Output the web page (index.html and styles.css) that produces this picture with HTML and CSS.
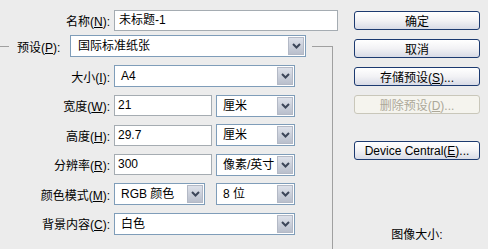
FILE: index.html
```html
<!DOCTYPE html>
<html lang="zh-CN">
<head>
  <meta charset="UTF-8">
  <title>新建</title>
  <link rel="stylesheet" href="styles.css">
</head>
<body>
  <div class="dialog">
    <!-- Columna izquierda: nombre y grupo de preajustes -->
    <div class="form">
      <div class="row name-row">
        <span class="lbl">名称(<u>N</u>):</span>
        <div class="text-input name-input">未标题-1</div>
      </div>

      <fieldset class="group">
        <legend>
          <span class="legend-lbl">预设(<u>P</u>):</span>
          <div class="combo preset"><span class="val">国际标准纸张</span><span class="arrow"><svg width="9" height="6" viewBox="0 0 9 6"><polyline points="1,1 4.5,4.5 8,1" /></svg></span></div>
        </legend>

        <div class="rows">
          <div class="row">
            <span class="lbl">大小(<u>I</u>):</span>
            <div class="combo wide"><span class="val">A4</span><span class="arrow"><svg width="9" height="6" viewBox="0 0 9 6"><polyline points="1,1 4.5,4.5 8,1" /></svg></span></div>
          </div>
          <div class="row">
            <span class="lbl">宽度(<u>W</u>):</span>
            <div class="text-input num">21</div>
            <div class="combo unit"><span class="val">厘米</span><span class="arrow"><svg width="9" height="6" viewBox="0 0 9 6"><polyline points="1,1 4.5,4.5 8,1" /></svg></span></div>
          </div>
          <div class="row">
            <span class="lbl">高度(<u>H</u>):</span>
            <div class="text-input num">29.7</div>
            <div class="combo unit"><span class="val">厘米</span><span class="arrow"><svg width="9" height="6" viewBox="0 0 9 6"><polyline points="1,1 4.5,4.5 8,1" /></svg></span></div>
          </div>
          <div class="row">
            <span class="lbl">分辨率(<u>R</u>):</span>
            <div class="text-input num">300</div>
            <div class="combo unit"><span class="val">像素/英寸</span><span class="arrow"><svg width="9" height="6" viewBox="0 0 9 6"><polyline points="1,1 4.5,4.5 8,1" /></svg></span></div>
          </div>
          <div class="row">
            <span class="lbl">颜色模式(<u>M</u>):</span>
            <div class="combo mode"><span class="val">RGB 颜色</span><span class="arrow"><svg width="9" height="6" viewBox="0 0 9 6"><polyline points="1,1 4.5,4.5 8,1" /></svg></span></div>
            <div class="combo unit"><span class="val">8 位</span><span class="arrow"><svg width="9" height="6" viewBox="0 0 9 6"><polyline points="1,1 4.5,4.5 8,1" /></svg></span></div>
          </div>
          <div class="row">
            <span class="lbl">背景内容(<u>C</u>):</span>
            <div class="combo wide"><span class="val">白色</span><span class="arrow"><svg width="9" height="6" viewBox="0 0 9 6"><polyline points="1,1 4.5,4.5 8,1" /></svg></span></div>
          </div>
        </div>
      </fieldset>
    </div>

    <!-- Columna derecha: botones -->
    <div class="side">
      <button class="btn">确定</button>
      <button class="btn">取消</button>
      <button class="btn">存储预设(<u>S</u>)...</button>
      <button class="btn" disabled>删除预设(<u>D</u>)...</button>
      <button class="btn device">Device Central(<u>E</u>)...</button>
      <div class="img-size">图像大小:</div>
    </div>
  </div>
</body>
</html>
```

FILE: styles.css
```css
/* Base */
* {
  box-sizing: border-box;
}
body {
  margin: 0;
  width: 488px;
  height: 249px;
  overflow: hidden;
  background: #ececec;
  color: #000;
  font-family: Tahoma, "Liberation Sans", "Noto Sans CJK SC", sans-serif;
  font-size: 12px;
}
u {
  text-decoration: underline;
  text-underline-offset: 1px;
}
.dialog {
  display: flex;
  height: 249px;
  overflow: hidden;
}
/* Columna izquierda */
.form {
  width: 338px;
}
.row {
  display: flex;
  align-items: center;
  height: 22px;
}
.name-row {
  margin-top: 10px;
  height: 21px;
}
.lbl {
  width: 114px;
  padding-right: 4px;
  text-align: right;
  white-space: nowrap;
}
.text-input {
  height: 21px;
  line-height: 19px;
  padding-left: 3px;
  background: #fff;
  border: 1px solid #a5acb2;
}
.name-input {
  width: 224px;
  padding-left: 4px;
}
.num {
  width: 98px;
  margin-right: 4px;
}
/* Grupo de preajustes */
.group {
  margin: 4px 0 0 -2px;
  width: 335px;
  padding: 0 0 30px 2px;
  border: none;
  border-top: 1px solid #a0a0a0;
  border-right: 1px solid #a0a0a0;
}
.group legend {
  display: flex;
  align-items: center;
  margin-left: 9px;
  padding: 0 6px 0 8px;
}
.legend-lbl {
  width: 53px;
  white-space: nowrap;
}
.rows {
  display: flex;
  flex-direction: column;
  gap: 7.5px;
  margin-top: 8px;
}
/* Listas desplegables */
.combo {
  display: flex;
  align-items: stretch;
  height: 22px;
  background: #fff;
  border: 1px solid #7f9db9;
}
.combo .val {
  flex: 1;
  padding-left: 6px;
  line-height: 20px;
  white-space: nowrap;
  overflow: hidden;
}
.combo .arrow {
  width: 16px;
  margin: 1px;
  display: flex;
  align-items: center;
  justify-content: center;
  background: linear-gradient(#dde1ea, #b9bfcc);
  border: 1px solid #b3b9c6;
}
.combo .arrow polyline {
  fill: none;
  stroke: #3c4659;
  stroke-width: 2;
}
.preset {
  width: 236px;
}
.preset .val {
  padding-left: 7px;
}
.wide {
  width: 181px;
}
.unit {
  width: 79px;
}
.mode {
  width: 91px;
  margin-right: 11px;
}
/* Columna derecha */
.side {
  width: 126px;
  margin-left: 16px;
  padding-top: 11px;
  display: flex;
  flex-direction: column;
}
.btn {
  height: 19px;
  margin-bottom: 9px;
  padding: 0;
  font: inherit;
  color: #000;
  background: linear-gradient(#ffffff, #f2f2f5 50%, #d8dbe6);
  border: 1px solid #1c3a70;
  border-radius: 3px;
}
.btn:disabled {
  color: #aca899;
  border-color: #c9c7ba;
  background: #f5f4ee;
}
.device {
  margin-top: 18px;
}
.img-size {
  margin-top: 56px;
  text-align: center;
}
```
